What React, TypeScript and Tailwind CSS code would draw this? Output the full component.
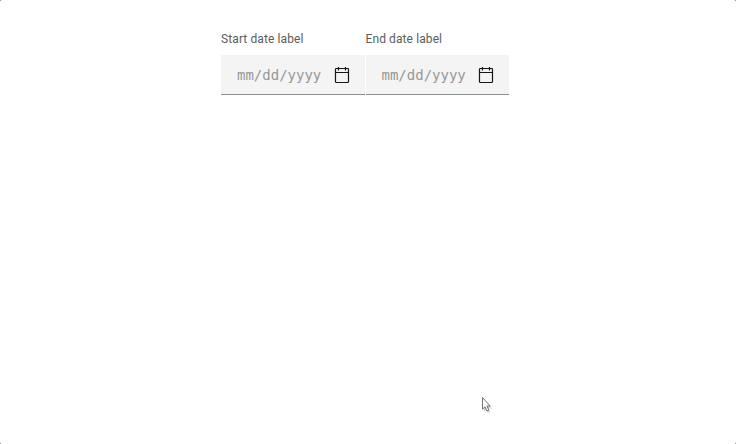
function CalendarIcon() {
  return (
    <svg viewBox="0 0 20 20" className="h-5 w-5 shrink-0" fill="none" stroke="#161616" strokeWidth="1.2" aria-hidden="true">
      <rect x="3.5" y="3.5" width="13" height="14" rx="0.8" />
      <path d="M3.5 7.5h13M6.5 2v3.5M13.5 2v3.5" />
    </svg>
  );
}

function DateField({ label }: { label: string }) {
  return (
    <label className="block w-[143.5px]">
      <span className="block h-6 whitespace-nowrap font-[Roboto,sans-serif] text-[12px] leading-4 tracking-[0.1px] text-[#5c5c5c]">
        {label}
      </span>
      <span className="flex h-10 items-center border-b border-[#8d8d8d] bg-[#f4f4f4] pl-4">
        <input
          placeholder="mm/dd/yyyy"
          className="w-[94.75px] bg-transparent pt-px font-['DejaVu_Sans_Mono',monospace] text-[14px] leading-5 outline-none placeholder:text-[#979797]"
        />
        <CalendarIcon />
      </span>
    </label>
  );
}

function Cursor() {
  return (
    <svg viewBox="0 0 14 20" className="absolute left-[480px] top-[395px] h-5 w-3.5" aria-hidden="true">
      <path d="M3.8 4.5v12.2l2.5-2.3 1.5 3.7 2.4-1-1.6-3.6H12z" fill="#000" opacity=".18" />
      <path d="M2.5 2.5v11.7l2.5-2.4 1.7 4.1 2-.8L7 11.1h3.2z" fill="#fff" stroke="#555" strokeWidth=".8" />
    </svg>
  );
}

export default function App() {
  return (
    <div className="relative h-[444px] w-[736px] overflow-hidden bg-[#777]">
      <main className="flex h-full items-start gap-px rounded-[2px] bg-white pl-[221px] pt-[31px]">
        <DateField label="Start date label" />
        <DateField label="End date label" />
      </main>
      <Cursor />
    </div>
  );
}
